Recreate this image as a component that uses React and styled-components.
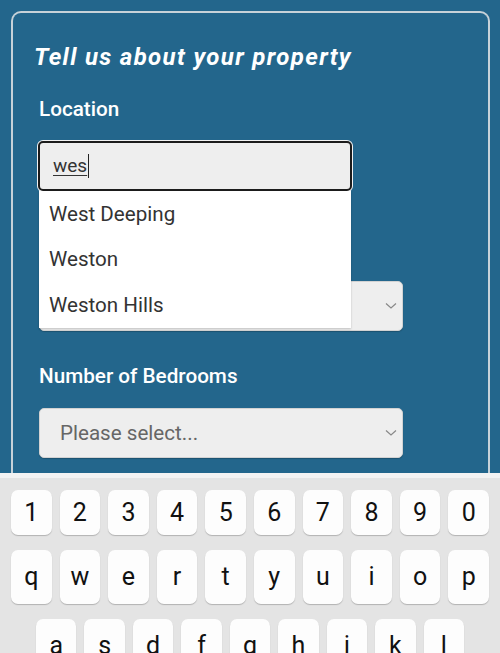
import styled, { createGlobalStyle } from "styled-components";

const GlobalStyle = createGlobalStyle`
    html, body {
        margin: 0;
        padding: 0;
    }
    body {
        font-family: Roboto, "Liberation Sans", sans-serif;
        background: #23668c;
    }
`

const Screen = styled.div`
    width: 500px;
    height: 653px;
    display: flex;
    flex-direction: column;
    overflow: hidden;
`

const Page = styled.div`
    height: 473px;
    flex-shrink: 0;
    background: #23668c;
    padding: 11px 10px 0 11px;
    box-sizing: border-box;
    overflow: hidden;
`

const Card = styled.div`
    border: 2px solid #c7d2d9;
    border-bottom: none;
    border-radius: 10px 10px 0 0;
    padding: 28px 20px 40px 21px;
    height: 100%;
    box-sizing: border-box;
`

const Title = styled.h2`
    margin: 0 0 24px 0;
    color: #fff;
    font-size: 24px;
    line-height: 32px;
    font-style: italic;
    font-weight: 700;
    letter-spacing: 1.35px;
`

const Group = styled.div`
    position: relative;
    padding-left: 5px;
    margin-bottom: ${props => props.$gap || 33}px;
`

const Label = styled.div`
    color: #fff;
    font-size: 20.7px;
    font-weight: 500;
    line-height: 24px;
    margin-bottom: 20px;
`

const InputBox = styled.div`
    width: 314px;
    height: 50px;
    margin-left: -1px;
    box-sizing: border-box;
    border: 2px solid #1c1c1c;
    border-radius: 5px;
    box-shadow: 0 0 0 1px #f2f2f2;
    background: #eeeeee;
    display: flex;
    align-items: center;
    padding-left: 13px;
    font-size: 19px;
    color: #333;
`

const Typed = styled.span`
    text-decoration: underline;
    text-underline-offset: 3px;
    text-decoration-thickness: 1px;
    border-right: 1.5px solid #222;
    padding-right: 1px;
    line-height: 24px;
`

const Suggestions = styled.ul`
    position: absolute;
    top: 100%;
    left: 5px;
    width: 312px;
    margin: 0;
    padding: 0;
    list-style: none;
    background: #fff;
    box-shadow: 0 1px 2px rgba(0, 0, 0, 0.2);
    z-index: 2;
`

const Suggestion = styled.li`
    height: 45.5px;
    display: flex;
    align-items: center;
    padding-left: 10px;
    font-size: 20.6px;
    color: #333;
`

const Select = styled.div`
    width: 364px;
    height: 50px;
    box-sizing: border-box;
    background: #eeeeee;
    border: 1px solid #d2d2d2;
    border-radius: 5px;
    box-shadow: 0 1px 1px rgba(0, 0, 0, 0.2);
    display: flex;
    align-items: center;
    justify-content: space-between;
    padding: 0 4px 0 20px;
    font-size: 20.6px;
    color: #666;
`

const Keyboard = styled.div`
    flex: 1;
    background: #e4e4e4;
    border-top: 5px solid #f3f3f3;
    padding: 12px 11px 0 11px;
    display: flex;
    flex-direction: column;
    gap: 15px;
`

const KeyRow = styled.div`
    display: grid;
    column-gap: 8px;
    padding-left: ${props => props.$indent || 0}px;
    padding-right: ${props => props.$indent || 0}px;
    grid-template-columns: repeat(${props => props.$count || 10}, 1fr);
`

const Key = styled.div`
    height: ${props => props.$tall ? 54 : 45}px;
    background: #fdfdfd;
    border-radius: 7px;
    box-shadow: 0 1px 1px rgba(0, 0, 0, 0.22);
    display: flex;
    align-items: center;
    justify-content: center;
    font-size: 25px;
    color: #111;
    font-family: Roboto, "Liberation Sans", sans-serif;
    padding-bottom: ${props => props.$tall ? 2 : 0}px;
    box-sizing: border-box;
`

function Chevron() {
    return (
        <svg width="14" height="10" viewBox="0 0 14 10">
            <polyline points="2,2.5 7,7 12,2.5" fill="none" stroke="#888" strokeWidth="1.2" />
        </svg>
    )
}

const rows = [
    { keys: "1234567890", tall: false },
    { keys: "qwertyuiop", tall: true },
    { keys: "asdfghjkl", tall: true, indent: 25 },
]

export default function App() {
    return (
        <Screen>
            <GlobalStyle />
            <Page>
                <Card>
                    <Title>Tell us about your property</Title>
                    <Group $gap={46}>
                        <Label>Location</Label>
                        <InputBox><Typed>wes</Typed></InputBox>
                        <Suggestions>
                            <Suggestion>West Deeping</Suggestion>
                            <Suggestion>Weston</Suggestion>
                            <Suggestion>Weston Hills</Suggestion>
                        </Suggestions>
                    </Group>
                    <Group>
                        <Label>Property Type</Label>
                        <Select><span>Please select...</span><Chevron /></Select>
                    </Group>
                    <Group>
                        <Label>Number of Bedrooms</Label>
                        <Select><span>Please select...</span><Chevron /></Select>
                    </Group>
                </Card>
            </Page>
            <Keyboard>
                {rows.map(row => (
                    <KeyRow key={row.keys} $count={row.keys.length} $indent={row.indent}>
                        {row.keys.split("").map(k => (
                            <Key key={k} $tall={row.tall}>{k}</Key>
                        ))}
                    </KeyRow>
                ))}
            </Keyboard>
        </Screen>
    )
}
